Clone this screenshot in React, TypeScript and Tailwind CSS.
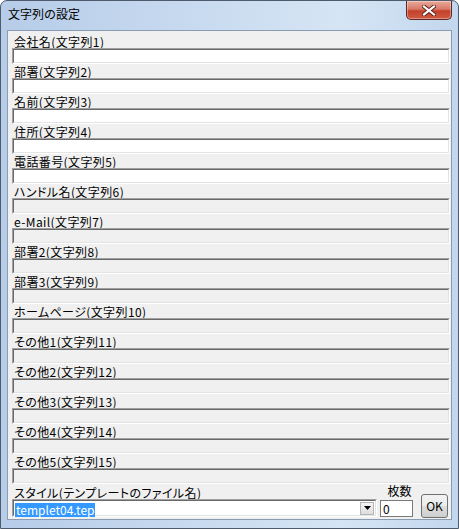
const fields = [
  { label: '会社名(文字列1)', enabled: true },
  { label: '部署(文字列2)', enabled: true },
  { label: '名前(文字列3)', enabled: true },
  { label: '住所(文字列4)', enabled: true },
  { label: '電話番号(文字列5)', enabled: true },
  { label: 'ハンドル名(文字列6)', enabled: false },
  { label: 'e-Mail(文字列7)', enabled: false },
  { label: '部署2(文字列8)', enabled: false },
  { label: '部署3(文字列9)', enabled: false },
  { label: 'ホームページ(文字列10)', enabled: false },
  { label: 'その他1(文字列11)', enabled: false },
  { label: 'その他2(文字列12)', enabled: false },
  { label: 'その他3(文字列13)', enabled: false },
  { label: 'その他4(文字列14)', enabled: false },
  { label: 'その他5(文字列15)', enabled: false },
]

const Sunken = ({ enabled, className, children }: { enabled: boolean; className?: string; children?: React.ReactNode }) => (
  <div className={`border-t border-l border-t-[#a0a0a0] border-l-[#a0a0a0] border-b border-r border-b-white border-r-white ${className ?? ''}`}>
    <div
      className={`h-full border-t border-l border-t-[#696969] border-l-[#696969] border-b border-r border-b-[#e3e3e3] border-r-[#e3e3e3] ${
        enabled ? 'bg-white' : 'bg-[#f0f0f0]'
      }`}
    >
      {children}
    </div>
  </div>
)

const CloseButton = () => (
  <div className="w-[46px] h-[19px] rounded-b-[5px] border border-t-0 border-[#5b2a24] bg-[linear-gradient(180deg,#e9a99b_0%,#d77a68_45%,#c4402c_55%,#cf5a40_100%)] flex items-center justify-center shadow-[inset_0_0_0_1px_rgba(255,255,255,0.35)]">
    <svg width="14" height="11" viewBox="0 0 14 11">
      <path d="M2 1.5 L12 9.5 M12 1.5 L2 9.5" stroke="#5a2018" strokeWidth="4" strokeLinecap="square" />
      <path d="M2 1.5 L12 9.5 M12 1.5 L2 9.5" stroke="#ffffff" strokeWidth="2.2" strokeLinecap="square" />
    </svg>
  </div>
)

export default function App() {
  return (
    <div
      className="w-[459px] h-[529px] rounded-t-[7px] border border-[#4d5b6c] bg-[linear-gradient(90deg,#b6cce8_0%,#c9dbf0_45%,#d6e5f5_75%,#c2d6ed_100%)] flex flex-col px-[6px] pb-[8px] text-black [font-feature-settings:'palt']"
      style={{ fontFamily: '"Noto Sans CJK JP", "Noto Sans", sans-serif' }}
    >
      <div className="h-[29px] flex justify-between items-start">
        <div className="pl-[1px] pt-[5px] text-[12px] leading-[16px] [font-feature-settings:normal]">文字列の設定</div>
        <CloseButton />
      </div>
      <div className="flex-1 bg-[#f0f0f0] border border-[#8a9cb2] pl-[4px] pr-[1px] pt-[3px] flex flex-col">
        {fields.map((f) => (
          <div key={f.label} className="flex flex-col">
            <div className="h-[14px] pl-[2px] text-[12px] leading-[16px] whitespace-nowrap tracking-[0.4px]">{f.label}</div>
            <Sunken enabled={f.enabled} className="h-[16px]" />
          </div>
        ))}
        <div className="flex items-end">
          <div className="flex flex-col w-[365px]">
            <div className="h-[14px] pl-[2px] text-[12px] leading-[16px] whitespace-nowrap tracking-[0.4px]">
              スタイル(テンプレートのファイル名)
            </div>
            <Sunken enabled className="h-[18px]">
              <div className="flex h-full items-center">
                <div className="flex-1 pl-[1px]">
                  <span className="bg-[#3399ff] text-white text-[12px] leading-[14px] px-[1px] inline-block">templet04.tep</span>
                </div>
                <div className="w-[14px] h-[13px] mr-[1px] bg-[linear-gradient(180deg,#f4f4f4,#dedede)] border border-[#b5b5b5] flex items-center justify-center">
                  <svg width="7" height="4" viewBox="0 0 7 4">
                    <path d="M0 0 H7 L3.5 4 Z" fill="#000" />
                  </svg>
                </div>
              </div>
            </Sunken>
          </div>
          <div className="flex flex-col items-center ml-[3px]">
            <div className="h-[16px] text-[12px] leading-[14px] pl-[6px]">枚数</div>
            <div className="w-[33px] h-[17px] border border-[#7a7a7a] bg-white text-[12px] leading-[15px] pl-[2px]">0</div>
          </div>
          <div className="ml-[8px] mb-[-1px] w-[27px] h-[24px] rounded-[3px] border border-[#707070] bg-[linear-gradient(180deg,#f2f2f2_0%,#ebebeb_50%,#dddddd_51%,#cfcfcf_100%)] flex items-center justify-center text-[12px] leading-[14px]">
            OK
          </div>
        </div>
      </div>
    </div>
  )
}
